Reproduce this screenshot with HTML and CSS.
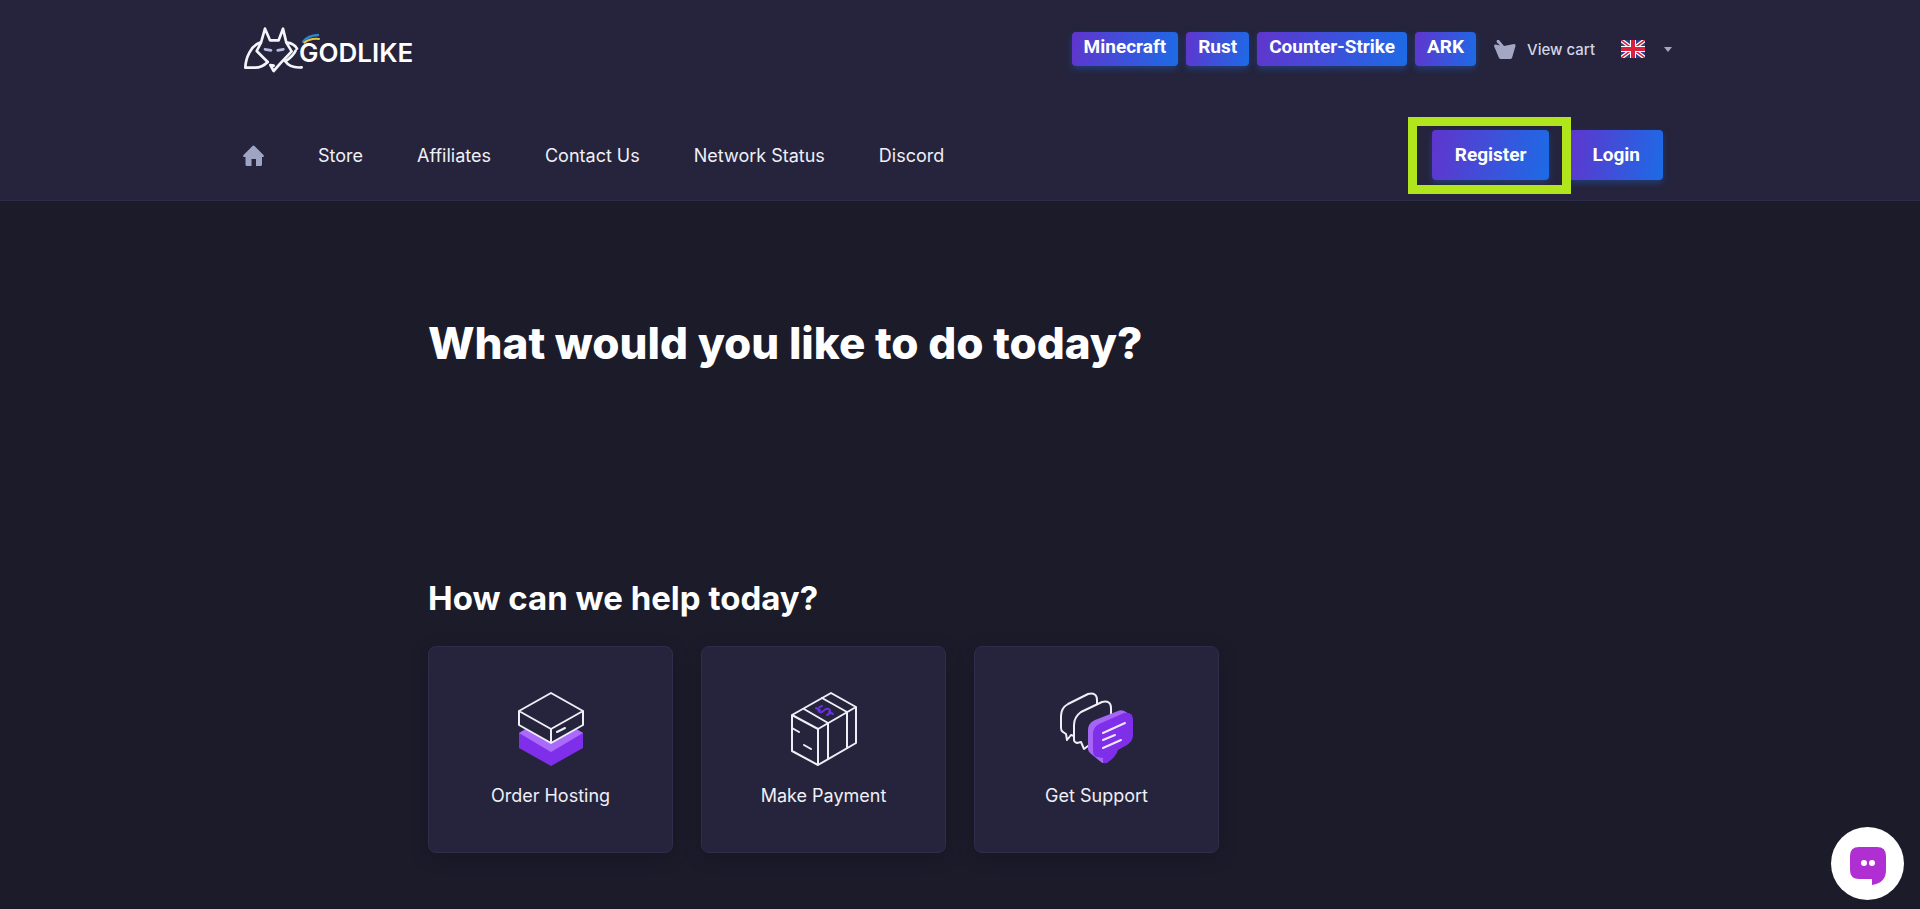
FILE: index.html
```html
<!DOCTYPE html>
<html lang="en">
<head>
  <meta charset="UTF-8" />
  <meta name="viewport" content="width=device-width, initial-scale=1.0" />
  <title>GODLIKE - Client Area</title>
  <link rel="stylesheet" href="styles.css">
</head>
<body>

<header class="header">
  <div class="topbar">
    <a href="#" class="logo">
      <svg class="logo-mark" viewBox="38 26 168 150" fill="none" stroke="#f4f4fb" stroke-width="8" stroke-linejoin="round" stroke-linecap="round">
        <path d="M104 40 L119 75 H145 L158 40 L168 82 L184 108 L152 142 L130 167 L120 149 L130 151 M104 40 L92 82 L79 107 L112 140" />
        <path d="M88 82 C62 92 46 126 45 157 H74 C92 157 102 150 112 140" />
        <path d="M172 82 C186 84 194 90 200 100 M164 137 C176 154 194 158 214 156 M196 106 C188 122 178 130 166 137" />
        <path d="M104 102 L122 105 M159 102 L142 105" stroke="#b9bbe0" />
        <path d="M218 79 C228 67 244 60 263 59" stroke="#2c86cf" stroke-width="7" />
        <path d="M222 82 C234 73 250 69 266 71" stroke="#e6c53c" stroke-width="6" />
      </svg>
      <span>GODLIKE</span>
    </a>
    <div class="top-links">
      <a href="#" class="tag">Minecraft</a>
      <a href="#" class="tag">Rust</a>
      <a href="#" class="tag">Counter-Strike</a>
      <a href="#" class="tag">ARK</a>
      <a href="#" class="cart">
        <svg width="22" height="19" viewBox="0 0 22 19" fill="#a3a7c4">
          <path d="M3 0 L5 0 L10 6 L20 4 Q22 4 21.500 6 L18 18 Q17.500 19 16 19 H7 Q5.500 19 5 18 L0 6 Q0 4 2 4.500 L6 5.500 L2.500 2 Z" />
        </svg>
        View cart
      </a>
      <button class="lang-btn" aria-label="Language">
        <svg width="24" height="18" viewBox="0 0 24 18">
          <rect width="24" height="18" fill="#2b3f8c" />
          <path d="M0 0 L24 18 M24 0 L0 18" stroke="#fff" stroke-width="4" />
          <path d="M0 0 L24 18 M24 0 L0 18" stroke="#d8203f" stroke-width="1.500" />
          <path d="M12 0 V18 M0 9 H24" stroke="#fff" stroke-width="6" />
          <path d="M12 0 V18 M0 9 H24" stroke="#d8203f" stroke-width="4" />
        </svg>
        <svg width="8" height="5" viewBox="0 0 8 5"><path d="M0 0 H8 L4 5 Z" fill="#a3a7c4" /></svg>
      </button>
    </div>
  </div>

  <div class="navbar">
    <nav class="nav">
      <a href="#" class="home" aria-label="Home">
        <svg width="21" height="21" viewBox="0 0 21 21" fill="#9fa4c3">
          <path d="M9.500 1 Q10.500 0 11.500 1 L20.500 10 Q21.500 12 20 12 H19 V19.500 Q19 21 17.500 21 H13 V14 H8.500 V21 H4 Q2.500 21 2.500 19.500 V12 H1 Q-0.500 12 0.500 10 Z" />
        </svg>
      </a>
      <a href="#">Store</a>
      <a href="#">Affiliates</a>
      <a href="#">Contact Us</a>
      <a href="#">Network Status</a>
      <a href="#">Discord</a>
    </nav>
    <div class="auth">
      <a href="#" class="auth-btn highlight">Register</a>
      <a href="#" class="auth-btn">Login</a>
    </div>
  </div>
</header>

<main class="container">
  <h1>What would you like to do today?</h1>
  <h2>How can we help today?</h2>
  <div class="cards">
    <a href="#" class="card">
      <svg width="66" height="74" viewBox="0 0 66 74">
        <path d="M1 41 L33 22 L65 41 V56 L33 74 L1 56 Z" fill="#7f2fea" />
        <path d="M1 41 L33 22 L65 41 L33 60 Z" fill="#ab6bfa" />
        <path d="M1 19 L33 1 L65 19 V33 L33 51 L1 33 Z" fill="#25243c" />
        <path d="M1 19 L33 1 L65 19 V33 L33 51 L1 33 Z L33 37 L65 19 M33 37 V51 M39 40 L47 36" fill="none" stroke="#eeeef6" stroke-width="2" stroke-linejoin="round" stroke-linecap="round" />
      </svg>
      Order Hosting
    </a>
    <a href="#" class="card">
      <svg width="66" height="74" viewBox="0 0 66 74" fill="none" stroke="#eeeef6" stroke-width="2" stroke-linejoin="round" stroke-linecap="round">
        <path d="M40 1 L65 15 V51 L27 73 L1 59 V23 Z M1 23 L27 37 L65 15 M27 37 V73" />
        <path d="M13 17 L37 31 V67 M31 6 L56 20 V56" />
        <path d="M1 36 L8 40 M13 53 L20 57" />
        <path d="M31 14 C25 16 27 21 31 20 L35 17 C40 16 41 21 36 23 M25 16 L29 18 M38 20 L42 22" stroke="#6a31e4" />
      </svg>
      Make Payment
    </a>
    <a href="#" class="card">
      <svg width="74" height="74" viewBox="0 0 74 74" fill="none" stroke-linejoin="round" stroke-linecap="round">
        <path d="M6 42 L3 40 Q1 39 1 36 V24 Q1 16 8 12 L28 2 Q37 0 37 8 V15 M6 42 L7 48 L11 43 L14 44" stroke="#eeeef6" stroke-width="2" />
        <path d="M14 48 V33 Q14 25 21 20 L42 10 Q51 8 51 16 V34 L28 54 L24 57 L21 50 L17 51 Q14 50 14 48 Z" fill="#25243c" stroke="#eeeef6" stroke-width="2" />
        <path d="M28 38 Q28 31 35 28 L58 19 Q62 17 66 20 L70 23 L45 70 Q43 72 41 70 L30 61 Q28 59 28 57 Z" fill="#a566f5" />
        <path d="M33 42 Q33 35 39 32 L64 21 Q73 19 73 28 V43 Q73 49 67 53 L58 58 Q56 65 47 71 Q44 72 43 70 V66 L37 65 Q33 64 33 59 Z" fill="#7f2fea" />
        <path d="M43 41 L65 31 M43 48 L55 43 M43 56 L61 48" stroke="#f1e6ff" stroke-width="2" />
      </svg>
      Get Support
    </a>
  </div>
</main>

<button class="chat-btn" aria-label="Chat">
  <svg width="36" height="38" viewBox="0 0 36 38">
    <path d="M9 0 H27 Q36 0 36 9 V23 Q36 36 22 38 V32 H9 Q0 32 0 23 V9 Q0 0 9 0 Z" fill="#b02fd3" />
    <circle cx="14" cy="16" r="3" fill="#fff" />
    <circle cx="22" cy="16" r="3" fill="#fff" />
  </svg>
</button>

</body>
</html>
```
FILE: styles.css
```css
* {
  box-sizing: border-box;
}
body {
  margin: 0;
  min-height: 100vh;
  font-family: Inter, "Open Sans", sans-serif;
  background-color: #1c1b2a;
  color: #ffffff;
}
a {
  color: inherit;
  text-decoration: none;
}
svg {
  display: block;
  flex-shrink: 0;
}
.header {
  background-color: #25243c;
  border-bottom: 1px solid #2d2c48;
  padding: 24px 24px 20px;
}
.topbar,
.navbar {
  display: flex;
  justify-content: space-between;
  align-items: center;
  max-width: 1434px;
  margin: 0 auto;
}
.topbar {
  height: 50px;
}
.navbar {
  margin-top: 56px;
}
.logo {
  display: flex;
  align-items: center;
  font-size: 26px;
  font-weight: 600;
  line-height: 32px;
}
.logo span {
  padding-top: 8px;
}
.logo-mark {
  width: 56px;
  height: 50px;
  overflow: visible;
}
.top-links {
  display: flex;
  align-items: center;
  gap: 8px;
}
.tag,
.auth-btn {
  font-family: Roboto, sans-serif;
  font-size: 19px;
  font-weight: 700;
  border-radius: 4px;
  background: linear-gradient(100deg, #6035cd, #1c6be6);
  box-shadow: 0 3px 6px rgba(28, 107, 230, 0.35);
}
.tag {
  line-height: 22px;
  padding: 4px 12px 8px;
}
.cart {
  display: flex;
  align-items: center;
  gap: 11px;
  margin: 0 18px 0 10px;
  font-size: 15px;
  font-weight: 500;
  color: #d4d5e4;
}
.lang-btn {
  display: flex;
  align-items: center;
  gap: 19px;
  border: none;
  background: none;
  padding: 0 5px 0 0;
  cursor: pointer;
}
.nav {
  display: flex;
  align-items: center;
  gap: 54px;
  font-size: 18px;
  color: #f0f0f6;
}
.auth {
  display: flex;
  gap: 20px;
  padding-right: 14px;
}
.auth-btn {
  line-height: 22px;
  padding: 14px 23px;
}
.highlight {
  position: relative;
}
.highlight::after {
  content: "";
  position: absolute;
  inset: -13px -22px -14px -24px;
  border: 9px solid #b2e61c;
  z-index: 1;
}
.container {
  max-width: 1112px;
  margin: 0 auto;
  padding: 112px 24px 24px;
}
h1 {
  margin: 0;
  font-size: 44px;
  font-weight: 800;
  line-height: 60px;
}
h2 {
  margin: 203px 0 26px;
  font-size: 33px;
  font-weight: 700;
  line-height: 44px;
}
.cards {
  display: flex;
  flex-wrap: wrap;
  gap: 28px;
}
.card {
  display: flex;
  flex-direction: column;
  align-items: center;
  gap: 18px;
  width: 245px;
  padding: 45px 16px 44px;
  font-size: 18px;
  line-height: 24px;
  color: #f0f0f6;
  background-color: #25243c;
  border: 1px solid #2f2e4a;
  border-radius: 8px;
  box-shadow: 0 4px 16px rgba(18, 17, 30, 0.4);
}
.chat-btn {
  position: fixed;
  right: 16px;
  bottom: 9px;
  display: flex;
  align-items: center;
  justify-content: center;
  width: 73px;
  height: 73px;
  padding: 4px 0 0;
  border: none;
  border-radius: 50%;
  background-color: #ffffff;
  cursor: pointer;
}
```
